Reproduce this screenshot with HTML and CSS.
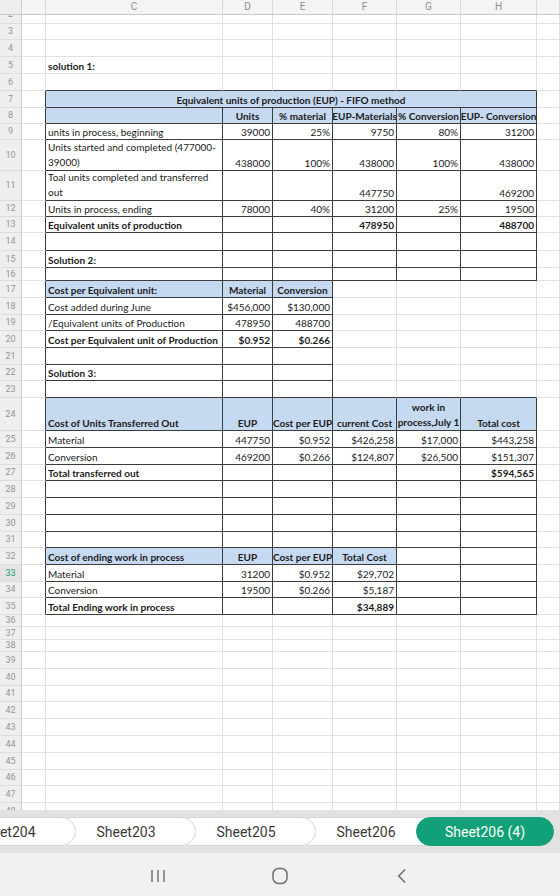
FILE: index.html
```html
<!DOCTYPE html>
<html lang="en">
<head>
  <meta charset="UTF-8" />
  <meta name="viewport" content="width=device-width, initial-scale=1.0" />
  <title>Sheet206 (4)</title>
  <link rel="stylesheet" href="styles.css">
</head>
<body>
  <main class="sheet" id="sheet">
    <div class="colhead">
      <div></div><div></div><div>C</div><div>D</div><div>E</div><div>F</div><div>G</div><div>H</div><div></div>
    </div>
  </main>

  <nav class="tabs">
    <div class="tab">Sheet204</div>
    <div class="tab">Sheet203</div>
    <div class="tab">Sheet205</div>
    <div class="tab">Sheet206</div>
    <div class="tab active">Sheet206 (4)</div>
  </nav>

  <footer class="navbar">
    <span class="key">
      <svg width="16" height="14" viewBox="0 0 16 14"><path d="M2 1v12M8 1v12M14 1v12" stroke="#6e6e6e" stroke-width="1.4" fill="none"/></svg>
    </span>
    <span class="key">
      <svg width="18" height="18" viewBox="0 0 18 18"><rect x="2" y="1.5" width="14" height="15" rx="5.5" fill="none" stroke="#6e6e6e" stroke-width="1.5"/></svg>
    </span>
    <span class="key">
      <svg width="10" height="16" viewBox="0 0 10 16"><path d="M8 1.5 1.8 8 8 14.5" fill="none" stroke="#6e6e6e" stroke-width="1.5"/></svg>
    </span>
  </footer>

  <script>
    const cols = ['B', 'C', 'D', 'E', 'F', 'G', 'H', 'I'];

    // row heights in px, anything not listed is 17px
    const heights = {
      2: 9, 3: 16, 8: 16, 9: 16, 10: 31, 11: 30, 12: 16, 13: 16, 14: 18, 16: 13,
      19: 16, 22: 16, 24: 33, 27: 16, 31: 16, 34: 16, 36: 12, 37: 13, 38: 12, 41: 16, 46: 16
    };

    // [text, classes, colspan]
    const cells = {
      5: { C: ['solution 1:', 'b'] },
      7: { C: ['Equivalent units of production (EUP) - FIFO method', 'b m f', 6] },
      8: { C: ['', 'f'], D: ['Units', 'b m f'], E: ['% material', 'b m f'], F: ['EUP-Materials', 'b m f'], G: ['% Conversion', 'b m f'], H: ['EUP- Conversion', 'b m f'] },
      9: { C: ['units in process, beginning'], D: ['39000'], E: ['25%'], F: ['9750'], G: ['80%'], H: ['31200'] },
      10: { C: ['Units started and completed (477000-39000)', 'w'], D: ['438000'], E: ['100%'], F: ['438000'], G: ['100%'], H: ['438000'] },
      11: { C: ['Toal units completed and transferred out', 'w'], F: ['447750'], H: ['469200'] },
      12: { C: ['Units in process, ending'], D: ['78000'], E: ['40%'], F: ['31200'], G: ['25%'], H: ['19500'] },
      13: { C: ['Equivalent units of production', 'b'], F: ['478950', 'b'], H: ['488700', 'b'] },
      15: { C: ['Solution 2:', 'b'] },
      17: { C: ['Cost per Equivalent unit:', 'b f'], D: ['Material', 'b m f'], E: ['Conversion', 'b m f'] },
      18: { C: ['Cost added during June'], D: ['$456,000'], E: ['$130,000'] },
      19: { C: ['/Equivalent units of Production'], D: ['478950'], E: ['488700'] },
      20: { C: ['Cost per Equivalent unit of Production', 'b'], D: ['$0.952', 'b'], E: ['$0.266', 'b'] },
      22: { C: ['Solution 3:', 'b'] },
      24: { C: ['Cost of Units Transferred Out', 'b f'], D: ['EUP', 'b m f'], E: ['Cost per EUP', 'b m f'], F: ['current Cost', 'b m f'], G: ['work in\nprocess,July 1', 'b m f pre'], H: ['Total cost', 'b m f'] },
      25: { C: ['Material'], D: ['447750'], E: ['$0.952'], F: ['$426,258'], G: ['$17,000'], H: ['$443,258'] },
      26: { C: ['Conversion'], D: ['469200'], E: ['$0.266'], F: ['$124,807'], G: ['$26,500'], H: ['$151,307'] },
      27: { C: ['Total transferred out', 'b'], H: ['$594,565', 'b'] },
      32: { C: ['Cost of ending work in process', 'b f'], D: ['EUP', 'b m f'], E: ['Cost per EUP', 'b m f'], F: ['Total Cost', 'b m f'] },
      33: { C: ['Material'], D: ['31200'], E: ['$0.952'], F: ['$29,702'] },
      34: { C: ['Conversion'], D: ['19500'], E: ['$0.266'], F: ['$5,187'] },
      35: { C: ['Total Ending work in process', 'b'], F: ['$34,889', 'b'] }
    };

    // C7:H35 has dark cell borders, except the F17:H23 block
    function boxed(r, c) {
      if (r < 7 || r > 35 || c < 1 || c > 6) return false;
      if (r >= 17 && r <= 23 && c >= 4) return false;
      return true;
    }

    const sheet = document.getElementById('sheet');

    for (let r = 2; r <= 48; r++) {
      const row = document.createElement('div');
      row.className = 'row h' + (heights[r] || 17);

      const head = document.createElement('div');
      head.className = 'rh' + (r === 33 ? ' on' : '');
      head.textContent = r;
      row.appendChild(head);

      const data = cells[r] || {};
      for (let c = 0; c < cols.length; c++) {
        const el = document.createElement('div');
        const [text = '', cls = '', span = 1] = data[cols[c]] || [];
        let names = 'cell ' + cls;

        if (boxed(r, c)) names += ' x';
        else if (c === 0 && r >= 7 && r <= 35) names += ' xr';
        else if ((r === 6 && c >= 1 && c <= 6) || (r === 23 && c >= 4 && c <= 6)) names += ' xb';

        if (/^[$\d.,%]+$/.test(text)) names += ' n';
        el.className = names.trim();
        el.textContent = text;
        if (span > 1) {
          el.style.gridColumn = 'span ' + span;
          c += span - 1;
        }
        row.appendChild(el);
      }
      sheet.appendChild(row);
    }
  </script>
</body>
</html>
```

FILE: styles.css
```css
* {
  box-sizing: border-box;
}
body {
  margin: 0;
  width: 560px;
  height: 896px;
  overflow: hidden;
  display: flex;
  flex-direction: column;
  background: #fff;
  font-family: Lato, "Liberation Sans", sans-serif;
  color: #1b1b1b;
}

/* grid */
.sheet {
  flex: none;
  height: 810px;
  overflow: hidden;
}
.colhead,
.row {
  display: grid;
  grid-template-columns: 22px 24px 177px 50px 60px 64px 64px 76px 23px;
}
.colhead {
  height: 15px;
  background: #f4f4f4;
  border-bottom: 1px solid #c9c9c9;
  font: 10px/14px Roboto, sans-serif;
  color: #8e8e8e;
  text-align: center;
}
.colhead div {
  border-right: 1px solid #dadada;
}
.colhead div:first-child {
  background: #eeeeee;
  border-right-color: #cfcfcf;
}

.h9 { height: 9px; }
.h12 { height: 12px; }
.h13 { height: 13px; }
.h16 { height: 16px; }
.h17 { height: 17px; }
.h18 { height: 18px; }
.h30 { height: 30px; }
.h31 { height: 31px; }
.h33 { height: 33px; }

.rh {
  display: flex;
  align-items: center;
  justify-content: center;
  overflow: hidden;
  background: #efefef;
  border-right: 1px solid #cfcfcf;
  border-bottom: 1px solid #dedede;
  font: 9px/17px Roboto, sans-serif;
  color: #959595;
}
.h9 .rh {
  align-items: flex-end;
}
.rh.on {
  background: #e4e4e4;
  color: #1d9a6c;
}

.cell {
  display: flex;
  align-items: flex-end;
  overflow: hidden;
  padding: 0 2px;
  border-right: 1px solid #e0e0e0;
  border-bottom: 1px solid #e0e0e0;
  font-size: 10px;
  line-height: 13px;
  white-space: nowrap;
}
.cell.b { font-weight: 700; }
.cell.n { justify-content: flex-end; }
.cell.m { justify-content: center; text-align: center; }
.cell.f { background: #c5d9f1; }
.cell.w { white-space: normal; line-height: 15px; }
.cell.pre { white-space: pre; line-height: 15px; }

.cell.x {
  border-right-color: #3c3c3c;
  border-bottom-color: #3c3c3c;
}
.cell.xr { border-right-color: #3c3c3c; }
.cell.xb { border-bottom-color: #3c3c3c; }

/* sheet tabs */
.tabs {
  flex: none;
  height: 43px;
  display: flex;
  align-items: center;
  background: #e2e2e2;
  overflow: hidden;
}
.tab {
  flex: none;
  position: relative;
  width: 140px;
  height: 29px;
  margin-left: -20px;
  display: flex;
  align-items: center;
  justify-content: center;
  background: #fff;
  border: 1px solid #d5d5d5;
  border-radius: 15px;
  font: 14px Roboto, sans-serif;
  color: #3a3a3a;
}
.tab:first-child { margin-left: -64px; z-index: 4; }
.tab:nth-child(2) { z-index: 3; }
.tab:nth-child(3) { z-index: 2; }
.tab:nth-child(4) { z-index: 1; }
.tab.active {
  z-index: 5;
  width: 138px;
  background: #12a079;
  border-color: #12a079;
  color: #fff;
}

/* system navigation */
.navbar {
  flex: none;
  height: 43px;
  display: flex;
  align-items: center;
  justify-content: center;
  background: #f1f1f1;
}
.key {
  width: 122px;
  display: flex;
  justify-content: center;
  align-items: center;
  padding-top: 3px;
}
```
